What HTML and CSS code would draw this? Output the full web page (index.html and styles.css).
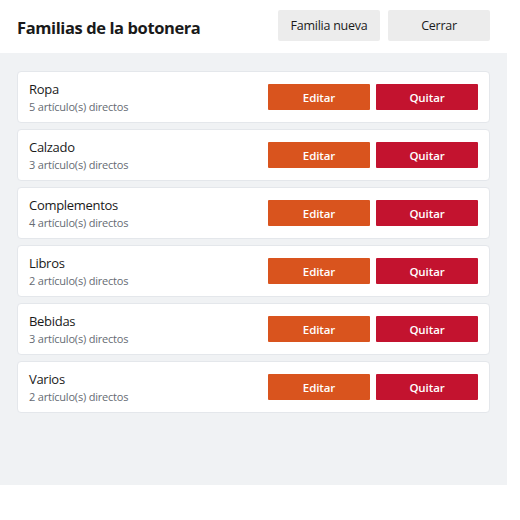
FILE: index.html
```html
<!DOCTYPE html>
<html lang="es">
<head>
    <meta charset="UTF-8">
    <meta name="viewport" content="width=device-width, initial-scale=1.0">
    <title>Familias de la botonera</title>
    <link rel="stylesheet" href="styles.css">
</head>
<body>
    <div class="dialog">
        <div class="dialog-header">
            <h1>Familias de la botonera</h1>
            <div class="header-actions">
                <button class="btn btn-light">Familia nueva</button>
                <button class="btn btn-light">Cerrar</button>
            </div>
        </div>
        <div class="dialog-body">
            <div class="family">
                <div class="family-info">
                    <div class="family-name">Ropa</div>
                    <div class="family-count">5 artículo(s) directos</div>
                </div>
                <div class="family-actions">
                    <button class="btn btn-edit">Editar</button>
                    <button class="btn btn-remove">Quitar</button>
                </div>
            </div>
            <div class="family">
                <div class="family-info">
                    <div class="family-name">Calzado</div>
                    <div class="family-count">3 artículo(s) directos</div>
                </div>
                <div class="family-actions">
                    <button class="btn btn-edit">Editar</button>
                    <button class="btn btn-remove">Quitar</button>
                </div>
            </div>
            <div class="family">
                <div class="family-info">
                    <div class="family-name">Complementos</div>
                    <div class="family-count">4 artículo(s) directos</div>
                </div>
                <div class="family-actions">
                    <button class="btn btn-edit">Editar</button>
                    <button class="btn btn-remove">Quitar</button>
                </div>
            </div>
            <div class="family">
                <div class="family-info">
                    <div class="family-name">Libros</div>
                    <div class="family-count">2 artículo(s) directos</div>
                </div>
                <div class="family-actions">
                    <button class="btn btn-edit">Editar</button>
                    <button class="btn btn-remove">Quitar</button>
                </div>
            </div>
            <div class="family">
                <div class="family-info">
                    <div class="family-name">Bebidas</div>
                    <div class="family-count">3 artículo(s) directos</div>
                </div>
                <div class="family-actions">
                    <button class="btn btn-edit">Editar</button>
                    <button class="btn btn-remove">Quitar</button>
                </div>
            </div>
            <div class="family">
                <div class="family-info">
                    <div class="family-name">Varios</div>
                    <div class="family-count">2 artículo(s) directos</div>
                </div>
                <div class="family-actions">
                    <button class="btn btn-edit">Editar</button>
                    <button class="btn btn-remove">Quitar</button>
                </div>
            </div>
        </div>
    </div>
</body>
</html>
```

FILE: styles.css
```css
body {
    margin: 0;
    padding: 0;
    background: #ffffff;
    font-family: 'Open Sans', 'Noto Sans', sans-serif;
    color: #1b1b1b;
}
.dialog {
    width: 507px;
    height: 485px;
    display: flex;
    flex-direction: column;
}
.dialog-header {
    height: 53px;
    box-sizing: border-box;
    padding: 0 17px;
    display: flex;
    align-items: center;
    justify-content: space-between;
    background: #ffffff;
}
h1 {
    margin: 0;
    font-size: 16.5px;
    font-weight: 700;
    letter-spacing: -0.4px;
    color: #1a1a1a;
    padding-top: 1px;
}
.header-actions {
    display: flex;
    gap: 8px;
    margin-top: -2px;
}
.btn {
    font-family: inherit;
    border: none;
    border-radius: 2px;
    cursor: pointer;
    padding: 0;
}
.btn-light {
    width: 102px;
    height: 31px;
    font-size: 12.5px;
    letter-spacing: -0.25px;
    background: #ececec;
    color: #1b1b1b;
}
.dialog-body {
    flex: 1;
    background: #f0f2f4;
    padding: 18px 17px;
    display: flex;
    flex-direction: column;
    gap: 6px;
}
.family {
    height: 52px;
    box-sizing: border-box;
    padding: 0 11px;
    display: flex;
    align-items: center;
    justify-content: space-between;
    background: #ffffff;
    border: 1px solid #e4e7eb;
    border-radius: 4px;
}
.family-name {
    font-size: 13px;
    letter-spacing: -0.3px;
    color: #1a1a1a;
    line-height: 18px;
}
.family-count {
    font-size: 11px;
    letter-spacing: -0.2px;
    color: #666b73;
    line-height: 16px;
    margin-top: 1px;
}
.family-actions {
    display: flex;
    gap: 6px;
}
.btn-edit,
.btn-remove {
    width: 102px;
    height: 26px;
    font-size: 11.5px;
    font-weight: 600;
    letter-spacing: -0.1px;
    color: #ffffff;
    border-radius: 1px;
}
.btn-edit {
    background: #d9541e;
}
.btn-remove {
    background: #c3132f;
}
```
